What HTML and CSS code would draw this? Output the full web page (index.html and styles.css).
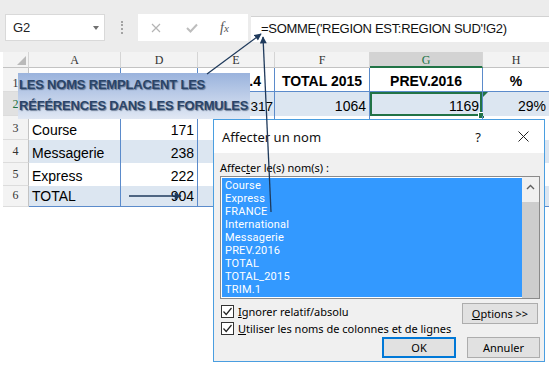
FILE: index.html
```html
<!DOCTYPE html>
<html lang="fr">
<head>
<meta charset="UTF-8">
<title>Affecter un nom</title>
<link rel="stylesheet" href="styles.css">
</head>
<body>
<div class="page">
	<div class="toolbar">
		<div class="namebox"><span>G2</span><i class="drop"></i></div>
		<div class="grip"></div>
		<div class="fnbox">
			<svg class="ico-x" width="10" height="10" viewBox="0 0 10 10"><path d="M1 1 L9 9 M9 1 L1 9" /></svg>
			<svg class="ico-ok" width="12" height="10" viewBox="0 0 12 10"><path d="M1 5 L4.5 8.5 L11 1.5" /></svg>
			<span class="fx"><i>f</i><i>x</i></span>
		</div>
		<div class="formula">=SOMME('REGION EST:REGION SUD'!G2)</div>
	</div>

	<div class="sheet">
		<div class="hd corner"><i></i></div>
		<div class="hd">A</div>
		<div class="hd">D</div>
		<div class="hd">E</div>
		<div class="hd">F</div>
		<div class="hd cur">G</div>
		<div class="hd last">H</div>

		<div class="rh first">1</div>
		<div class="c r1"></div>
		<div class="c r1"></div>
		<div class="c r1 b col-e">TRIM.4</div>
		<div class="c r1 b">TOTAL 2015</div>
		<div class="c r1 b">PREV.2016</div>
		<div class="c r1 b last">%</div>

		<div class="rh cur">2</div>
		<div class="c band"></div>
		<div class="c band"></div>
		<div class="c band n col-e tight">317</div>
		<div class="c band n">1064</div>
		<div class="c band n sel">1169<span class="handle"></span></div>
		<div class="c band n last">29%<span class="flag"></span></div>

		<div class="rh">3</div>
		<div class="c">Course</div>
		<div class="c n">171</div>
		<div class="c"></div>
		<div class="c"></div>
		<div class="c"></div>
		<div class="c last"></div>

		<div class="rh">4</div>
		<div class="c band">Messagerie</div>
		<div class="c band n">238</div>
		<div class="c band"></div>
		<div class="c band"></div>
		<div class="c band"></div>
		<div class="c band last"></div>

		<div class="rh">5</div>
		<div class="c">Express</div>
		<div class="c n">222</div>
		<div class="c"></div>
		<div class="c"></div>
		<div class="c"></div>
		<div class="c last"></div>

		<div class="rh">6</div>
		<div class="c band r6">TOTAL</div>
		<div class="c band r6 n">904</div>
		<div class="c band r6"></div>
		<div class="c band r6"></div>
		<div class="c band r6"></div>
		<div class="c band r6 last"></div>
	</div>

	<div class="banner">LES NOMS REMPLACENT LES<br>RÉFÉRENCES DANS LES FORMULES</div>

	<div class="dialog">
		<div class="dlg-title">
			<span>Affecter un nom</span>
			<span class="help">?</span>
			<svg class="close" width="11" height="11" viewBox="0 0 11 11"><path d="M0.5 0.5 L10.5 10.5 M10.5 0.5 L0.5 10.5" /></svg>
		</div>
		<div class="dlg-body">
			<div class="label">Affec<u>t</u>er le(s) nom(s) :</div>
			<div class="listbox">
				<ul class="items">
					<li>Course</li>
					<li>Express</li>
					<li>FRANCE</li>
					<li>International</li>
					<li>Messagerie</li>
					<li>PREV.2016</li>
					<li>TOTAL</li>
					<li>TOTAL_2015</li>
					<li>TRIM.1</li>
				</ul>
				<div class="scroll">
					<svg class="up" width="9" height="6" viewBox="0 0 9 6"><path d="M1 5 L4.5 1.5 L8 5" /></svg>
					<div class="thumb"></div>
				</div>
			</div>
			<div class="opts">
				<div class="checks">
					<label class="chk"><span class="box"><svg width="11" height="11" viewBox="0 0 11 11"><path d="M1.5 5.5 L4.2 8.5 L9.5 2" /></svg></span><span><u>I</u>gnorer relatif/absolu</span></label>
					<label class="chk"><span class="box"><svg width="11" height="11" viewBox="0 0 11 11"><path d="M1.5 5.5 L4.2 8.5 L9.5 2" /></svg></span><span><u>U</u>tiliser les noms de colonnes et de lignes</span></label>
				</div>
				<button class="btn opt"><u>O</u>ptions &gt;&gt;</button>
			</div>
			<div class="actions">
				<button class="btn ok">OK</button>
				<button class="btn">Annuler</button>
			</div>
		</div>
	</div>

	<svg class="arrows" width="549" height="365" viewBox="0 0 549 365">
		<defs>
			<marker id="head" viewBox="0 0 10 10" refX="9" refY="5" markerWidth="8" markerHeight="7" markerUnits="userSpaceOnUse" orient="auto">
				<path d="M0 0 L10 5 L0 10 z" fill="#1f3a5c" />
			</marker>
		</defs>
		<line x1="207" y1="74" x2="261" y2="34" marker-end="url(#head)" />
		<line x1="271" y1="212" x2="263" y2="37" marker-end="url(#head)" />
		<line x1="129" y1="196" x2="181" y2="196" marker-end="url(#head)" />
	</svg>
</div>
</body>
</html>
```

FILE: styles.css
```css
html, body, div, ul, li, button { margin:0; padding:0; }
body { background:#fff; font:14px "Liberation Sans", Arial, sans-serif; color:#000; }
ul li { list-style:none; }

.page { position:relative; width:549px; height:365px; overflow:hidden; }

/* formula bar */
.toolbar { display:flex; align-items:flex-start; height:52px; padding-top:14px; box-sizing:border-box; background:#ececec; }
.namebox { display:flex; align-items:center; justify-content:space-between; width:100px; height:27px; margin-left:5px; padding:0 5px 0 7px; box-sizing:border-box; background:#fff; border:1px solid #d9d9d9; font-size:13px; color:#222; }
.drop { width:0; height:0; border-left:3px solid transparent; border-right:3px solid transparent; border-top:4px solid #707070; }
.grip { width:0; height:13px; margin:7px 0 0 16px; border-left:2px dotted #a3a3a3; }
.fnbox { display:flex; align-items:center; width:110px; height:27px; margin-left:15px; background:#fff; }
.ico-x { margin-left:13px; stroke:#b4b4b4; stroke-width:1.2; fill:none; }
.ico-ok { margin-left:25px; stroke:#bdbdbd; stroke-width:2; fill:none; }
.fx { margin-left:22px; font:italic 14px "Liberation Serif", serif; color:#555; }
.fx i + i { font-size:11px; }
.formula { flex:1; height:25px; margin:2px 0 0 3px; padding-left:10px; background:#fff; border-top:1px solid #d2d2d2; font-size:13px; letter-spacing:-0.3px; line-height:24px; color:#111; white-space:nowrap; }

/* grid */
.sheet { display:grid; grid-template-columns:26px 92px 77px 77px 95px 113px 66px; grid-template-rows:16px 24px 24px 24px 23px 23px 21px; margin-left:3px; }
.hd { position:relative; background:#f3f3f3; border-right:1px solid #d5d5d5; border-bottom:1px solid #c3c3c3; font:12px "Liberation Serif", serif; line-height:16px; text-align:center; color:#333; }
.hd.cur { background:#d3d3d3; color:#217346; border-bottom:2px solid #217346; }
.hd.last { border-right:0 none; }
.corner i { position:absolute; right:2px; bottom:2px; width:0; height:0; border-left:9px solid transparent; border-bottom:9px solid #b9b9b9; }
.rh { display:flex; align-items:flex-end; justify-content:center; padding-bottom:3px; box-sizing:border-box; background:#f3f3f3; border-right:1px solid #c3c3c3; border-bottom:1px solid #dcdcdc; font:12px "Liberation Serif", serif; color:#333; }
.rh.first { padding-bottom:0; }
.rh.cur { background:#e1e1e1; color:#217346; }
.c { position:relative; display:flex; align-items:flex-end; padding:0 3px 2px; box-sizing:border-box; border-right:1px solid #5b8bcb; white-space:nowrap; overflow:hidden; }
.c.last { border-right:0 none; overflow:visible; }
.c.n { justify-content:flex-end; }
.c.b { justify-content:center; font-weight:bold; }
.c.col-e { padding:0 2px 2px 6px; }
.c.tight { padding-right:1px; font-size:13.5px; }
.c.band { background:#dce6f1; }
.c.r1, .c.r6 { border-bottom:1px solid #5b8bcb; }
.c.sel { overflow:visible; box-shadow:inset 0 0 0 2px #217346; }
.handle { position:absolute; right:-3px; bottom:-3px; width:5px; height:5px; background:#217346; border:1px solid #fff; }
.flag { position:absolute; left:0; top:0; width:0; height:0; border-top:5px solid #217346; border-right:5px solid transparent; }

/* callout */
.banner { position:absolute; left:18px; top:73px; width:232px; height:46px; padding:1px 0 0 1px; box-sizing:border-box; overflow:hidden; background:linear-gradient(#9ab3dd, #e1e8f4); font:bold 13px/21px "Liberation Sans", Arial, sans-serif; letter-spacing:-0.2px; color:#2a4468; text-shadow:1px 1px 1px rgba(30,50,80,.55); white-space:nowrap; }

/* dialog */
.dialog { position:absolute; left:213px; top:119px; width:332px; height:243px; box-sizing:border-box; background:#f0f0f0; border:1px solid #4a9ee0; font:11px "Noto Sans", "DejaVu Sans", sans-serif; color:#000; }
.dlg-title { display:flex; align-items:center; height:33px; padding-left:8px; background:#fff; font-size:13px; color:#111; }
.help { margin-left:auto; font-size:13px; }
.close { margin:0 15px 0 37px; stroke:#222; stroke-width:1; fill:none; }
.dlg-body { padding:7px 4px 0 6px; }
.label { height:15px; line-height:15px; }
.listbox { display:flex; height:123px; margin-top:1px; box-sizing:border-box; background:#fff; border:1px solid #8a8a8a; }
.items { flex:1; margin:1px 0 1px 1px; padding:1px 0 0 3px; background:#3399ff; color:#fff; font:11px/13px Roboto, "Noto Sans", sans-serif; letter-spacing:0.2px; }
.scroll { display:flex; flex-direction:column; align-items:center; width:17px; background:#f0f0f0; }
.up { margin-top:7px; stroke:#606060; stroke-width:1.4; fill:none; }
.thumb { width:17px; flex:1; margin-top:12px; background:#cdcdcd; }
.opts { display:flex; justify-content:space-between; margin-top:4px; }
.chk { display:flex; align-items:center; height:17px; }
.box { display:flex; align-items:center; justify-content:center; width:13px; height:13px; margin:0 4px 0 1px; box-sizing:border-box; background:#fff; border:1px solid #333; }
.box svg { stroke:#222; stroke-width:1.2; fill:none; }
.btn { height:21px; box-sizing:border-box; background:#e1e1e1; border:1px solid #adadad; font:11px "Noto Sans", "DejaVu Sans", sans-serif; color:#000; }
.btn.opt { width:76px; margin-right:2px; }
.actions { display:flex; justify-content:flex-end; gap:11px; margin-top:0; }
.actions .btn { width:73px; height:21px; }
.actions .btn.ok { width:74px; border:2px solid #0078d7; }

.arrows { position:absolute; left:0; top:0; pointer-events:none; }
.arrows line { stroke:#1f3a5c; stroke-width:1.3; }
```
